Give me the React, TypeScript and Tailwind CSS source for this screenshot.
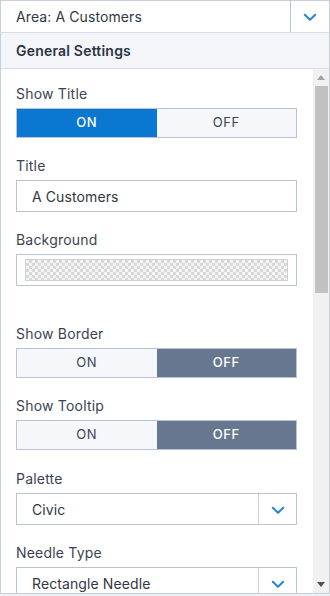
import React from "react";

const Chevron = () => (
  <svg width="14" height="9" viewBox="0 0 14 9" fill="none">
    <path d="M1.8 1.8 L7 6.8 L12.2 1.8" stroke="#2b87d3" strokeWidth="2.1" strokeLinecap="round" strokeLinejoin="round" />
  </svg>
);

const Label = ({ children }: { children: React.ReactNode }) => (
  <div className="h-5 leading-5 text-[14px] tracking-[0.2px] text-[#3b4352] mb-1">{children}</div>
);

const Toggle = ({ on }: { on: boolean }) => (
  <div className="flex h-[30px] border border-[#b9c4d6] text-[13px] tracking-[0.6px]">
    <div className={on ? "flex-1 flex items-center justify-center bg-[#0a78d0] text-white font-medium" : "flex-1 flex items-center justify-center bg-[#f5f7fa] text-[#3b4352]"}>ON</div>
    <div className={!on ? "flex-1 flex items-center justify-center bg-[#67778f] text-white font-medium" : "flex-1 flex items-center justify-center bg-[#f5f7fa] text-[#3b4352]"}>OFF</div>
  </div>
);

const Select = ({ value }: { value: string }) => (
  <div className="flex h-8 border border-[#b9c4d6] bg-white">
    <div className="flex-1 flex items-center pl-[15px] text-[14px] text-[#2f3744] tracking-[0.1px]">{value}</div>
    <div className="w-[38px] border-l border-[#c9d1de] flex items-center justify-center pt-[2px]">
      <Chevron />
    </div>
  </div>
);

export default function App() {
  return (
    <div className="w-[330px] h-[596px] bg-[#eef0f3] font-['Inter',sans-serif] overflow-hidden">
      <div className="h-[594px] border border-[#c5cfdd] flex flex-col bg-white">
        <div className="h-[31px] flex bg-white shrink-0">
          <div className="flex-1 flex items-center pl-[15px] text-[14px] text-[#2f3744] tracking-[0.1px]">Area: A Customers</div>
          <div className="w-[39px] border-l border-[#b9c4d6] flex items-center justify-center pt-[2px]">
            <Chevron />
          </div>
        </div>
        <div className="h-[37px] shrink-0 bg-[#f3f5f8] border-t border-b border-[#d6dce5] flex items-center pl-[15px] text-[14px] font-semibold text-[#2c3443] tracking-[0.2px]">
          General Settings
        </div>
        <div className="flex-1 flex min-h-0">
          <div className="flex-1 pl-[15px] pr-[16px] pt-[15px] overflow-hidden">
            <Label>Show Title</Label>
            <Toggle on={true} />
            <div className="h-[18px]" />
            <Label>Title</Label>
            <div className="h-8 border border-[#b9c4d6] flex items-center pl-[15px] text-[14px] text-[#2f3744] tracking-[0.1px]">A Customers</div>
            <div className="h-[18px]" />
            <Label>Background</Label>
            <div className="h-8 border border-[#b9c4d6] p-[4px_8px]">
              <div className="h-full border border-[#d0d0d0] bg-[repeating-conic-gradient(#d8d8d8_0%_25%,#f4f4f4_0%_50%)] bg-[length:6px_6px]" />
            </div>
            <div className="h-[38px]" />
            <Label>Show Border</Label>
            <Toggle on={false} />
            <div className="h-[18px]" />
            <Label>Show Tooltip</Label>
            <Toggle on={false} />
            <div className="h-[19px]" />
            <Label>Palette</Label>
            <Select value="Civic" />
            <div className="h-[18px]" />
            <Label>Needle Type</Label>
            <Select value="Rectangle Needle" />
          </div>
          <div className="w-[16px] shrink-0 bg-[#f1f1f1] flex flex-col items-center">
            <div className="h-[17px] flex items-center justify-center">
              <svg width="8" height="5" viewBox="0 0 8 5"><path d="M0 5 L4 0 L8 5 Z" fill="#a3a3a3" /></svg>
            </div>
            <div className="w-[13px] h-[207px] bg-[#c1c1c1]" />
            <div className="flex-1" />
            <div className="h-[17px] flex items-center justify-center">
              <svg width="8" height="5" viewBox="0 0 8 5"><path d="M0 0 L4 5 L8 0 Z" fill="#505050" /></svg>
            </div>
          </div>
        </div>
      </div>
    </div>
  );
}
